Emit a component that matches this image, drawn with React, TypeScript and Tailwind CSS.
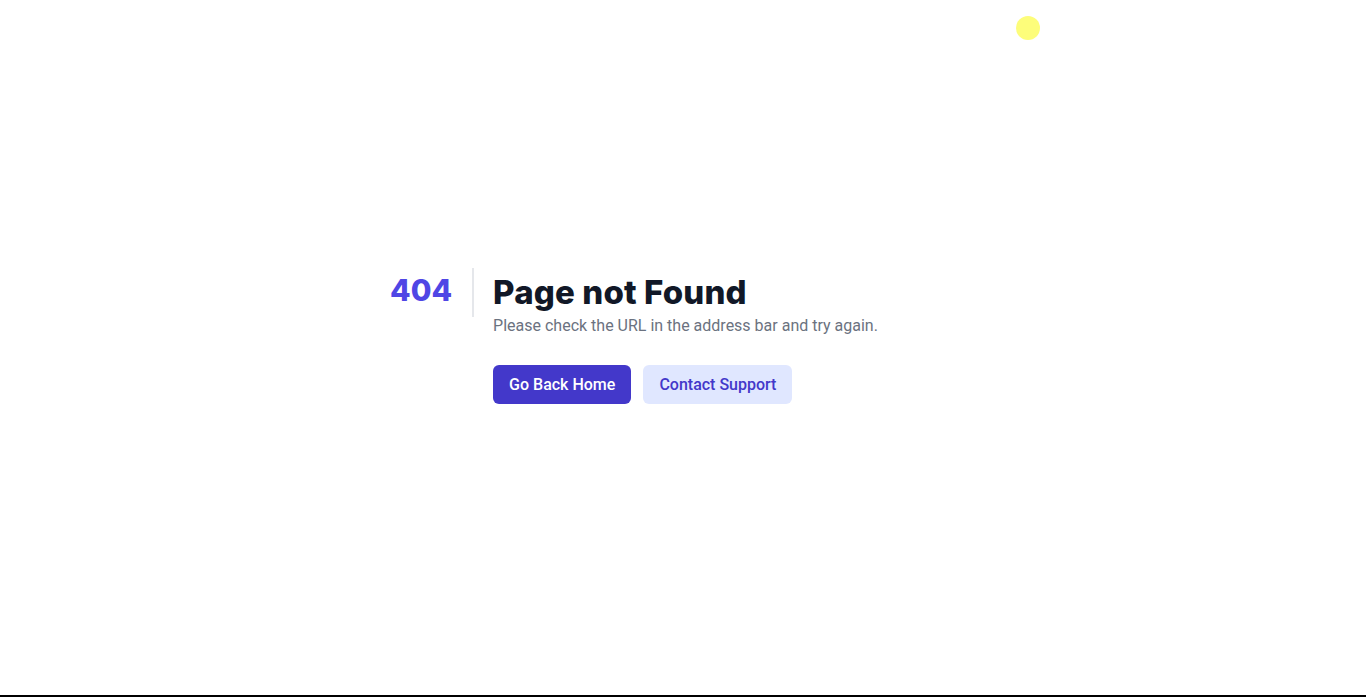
import React from "react";

export default function App() {
  return (
    <div className="relative flex h-[697px] w-full flex-col bg-white font-['Roboto',sans-serif]">
      {/* cursor highlight */}
      <div className="pointer-events-none absolute left-[1016px] top-[16px] h-6 w-6 rounded-full bg-[#fdfd7a]" />

      <main className="flex flex-1 items-center justify-center pb-[24px]">
        <div className="w-[586px]">
          <div className="flex">
            <p className="pt-[2px] font-['Inter',sans-serif] text-[30px] font-extrabold leading-[40px] text-[#4f46e5]">
              404
            </p>
            <div className="ml-5 flex-1">
              <div className="flex">
                <div className="h-[49px] w-[2px] shrink-0 bg-[#e5e7eb]" />
                <div className="pl-[19px]">
                  <h1 className="mt-[4px] font-['Inter',sans-serif] text-[33px] font-extrabold leading-[40px] tracking-[0.15px] text-[#111827]">
                    Page not Found
                  </h1>
                  <p className="mt-[2px] text-base leading-6 text-[#6b7280]">
                    Please check the URL in the address bar and try again.
                  </p>
                </div>
              </div>
              <div className="mt-[27px] flex gap-3 pl-[21px]">
                <button className="rounded-md bg-[#4338ca] px-4 py-2 text-base font-medium leading-[23px] text-white">
                  Go Back Home
                </button>
                <button className="rounded-md bg-[#e0e7ff] px-4 py-2 text-base font-medium leading-[23px] text-[#4338ca]">
                  Contact Support
                </button>
              </div>
            </div>
          </div>
        </div>
      </main>

      <div className="h-[2px] w-full bg-black" />
    </div>
  );
}
